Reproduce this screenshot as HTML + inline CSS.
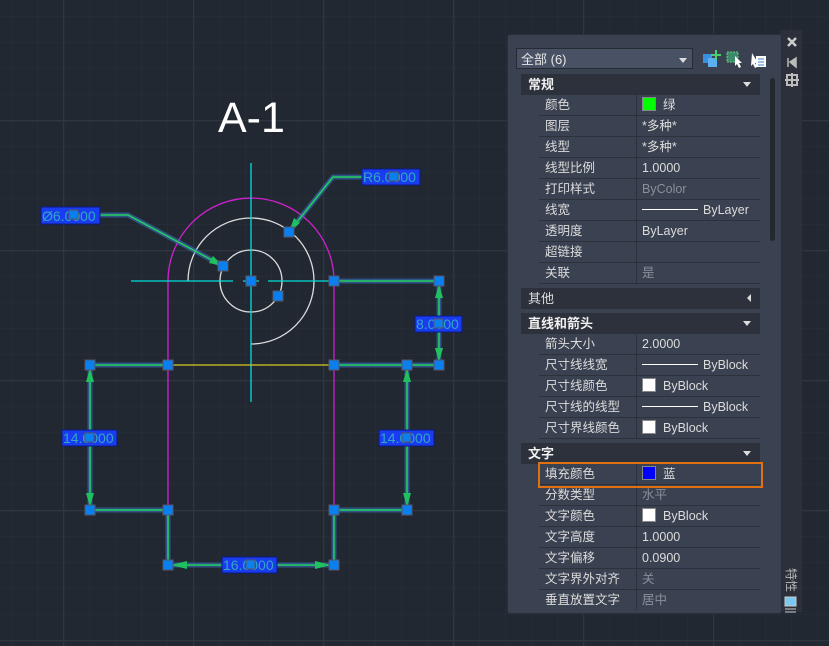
<!DOCTYPE html>
<html><head><meta charset="utf-8"><style>
body{margin:0;width:829px;height:646px;overflow:hidden;background:#222831;font-family:"Liberation Sans","Noto Sans CJK SC",sans-serif;position:relative}
svg{position:absolute;left:0;top:0}
.panel{position:absolute;left:507px;top:34px;width:273px;height:578px;background:#3a4150;border:1px solid #2a2f38;border-radius:3px}
.strip{position:absolute;left:780px;top:30px;width:22px;height:582px;background:#2b303a}
.sel{position:absolute;left:516px;top:48px;width:177px;height:21px;background:#485264;border:1px solid #262b33;color:#e6e6e6;font-size:13px;line-height:21px;padding-left:4px;box-sizing:border-box}
.sel:after{content:"";position:absolute;right:5px;top:9px;border:4px solid transparent;border-top:5px solid #ddd}
.hdr{position:absolute;left:521px;width:239px;height:21px;background:#2c313b;color:#f0f0f0;font-weight:bold;font-size:13px;line-height:21px;padding-left:7px;box-sizing:border-box}
.hdr.o{font-weight:normal;color:#ddd}
.tri{position:absolute;right:9px;top:8px;border:4px solid transparent;border-top:5px solid #ddd}
.tl{position:absolute;right:9px;top:6px;border:4px solid transparent;border-right:4px solid #ddd}
.row{position:absolute;left:539px;width:221px;height:20px;border-bottom:1px solid #2c313b;font-size:12.5px;line-height:20px;color:#dcdcdc}
.row .l{position:absolute;left:0;width:98px;padding-left:6px;box-sizing:border-box;border-right:1px solid #2c313b;height:20px;}
.row .v{position:absolute;left:99px;padding-left:4px;white-space:nowrap}
.g{color:#8a909a}
.sw{display:inline-block;width:12px;height:12px;border:1px solid #888;vertical-align:-2px;margin-right:7px}
.ln{display:inline-block;width:56px;border-top:1px solid #fff;vertical-align:4px;margin-right:5px}
.scroll{position:absolute;left:770px;top:78px;width:5px;height:163px;background:#242830;border-radius:3px}
</style></head><body>
<svg width="829" height="646">
<defs>
<pattern id="mn" x="11" y="16" width="26" height="26" patternUnits="userSpaceOnUse"><path d="M0 0H26M0 0V26" stroke="#283039" stroke-width="1" fill="none"/></pattern>
<pattern id="mj" x="63" y="120" width="130" height="130" patternUnits="userSpaceOnUse"><path d="M0 0.5H130M0.5 0V130" stroke="#2f3642" stroke-width="1.5" fill="none"/></pattern>
</defs>
<rect width="829" height="646" fill="url(#mn)"/>
<rect width="829" height="646" fill="url(#mj)"/>
<text x="218" y="132" fill="#fff" font-size="43" font-family="Liberation Sans">A-1</text>
<g fill="none">
<path d="M168 510V281A83 83 0 0 1 334 281V510" stroke="#d020d0" stroke-width="1.3"/>
<circle cx="251" cy="281" r="31" stroke="#ddd" stroke-width="1.3"/>
<path d="M188 281A63 63 0 1 1 251 344" stroke="#ddd" stroke-width="1.3"/>
<path d="M251 163V402M131 281H233M243 281H247M255 281H259M268 281H334" stroke="#00dede" stroke-width="1.3"/>
<path d="M168 365H334" stroke="#d8c820" stroke-width="1.3"/>
<g stroke="#3a6fc0" stroke-width="5" opacity="0.6">
<path d="M90 365H168M334 365H439M334 281H439M439 281V365M90 365V510M407 365V510M90 510H168M334 510H407M168 510V565M334 510V565M168 565H334M100 215H128L223 266M420 177H333L289 232"/>
</g>
<g stroke="#22d060" stroke-width="1.5">
<path d="M90 365H168M334 365H439M334 281H439M439 281V365M90 365V510M407 365V510M90 510H168M334 510H407M168 510V565M334 510V565M168 565H334M100 215H128L223 266M420 177H333L289 232"/>
</g>
</g>
<g fill="#20c060">
<path d="M439 284l-4 14h8zM439 362l-4-14h8zM90 368l-4 14h8zM90 507l-4-14h8zM407 368l-4 14h8zM407 507l-4-14h8zM171 565l16-4v8zM331 565l-16-4v8zM223 266l-14-3 4-7zM289 232l5-14 6 5z"/>
</g>
<g font-family="Liberation Sans" font-size="14" fill="#30a8c0">
<rect x="41" y="207" width="59" height="17" fill="#1a3cf0" stroke="#0a1a80"/><text x="42" y="221">Ø6.0000</text>
<rect x="362" y="169" width="58" height="16" fill="#1a3cf0" stroke="#0a1a80"/><text x="363" y="182">R6.0000</text>
<rect x="415" y="316" width="47" height="16" fill="#1a3cf0" stroke="#0a1a80"/><text x="416" y="329">8.0000</text>
<rect x="62" y="430" width="55" height="16" fill="#1a3cf0" stroke="#0a1a80"/><text x="63" y="443">14.0000</text>
<rect x="379" y="430" width="55" height="16" fill="#1a3cf0" stroke="#0a1a80"/><text x="380" y="443">14.0000</text>
<rect x="222" y="557" width="55" height="16" fill="#1a3cf0" stroke="#0a1a80"/><text x="223" y="570">16.0000</text>
</g>
<g fill="#0a80f0" stroke="#556" stroke-width="1">
<rect x="246" y="276" width="10" height="10"/><rect x="218" y="261" width="10" height="10"/><rect x="284" y="227" width="10" height="10"/><rect x="273" y="291" width="10" height="10"/>
<rect x="329" y="276" width="10" height="10"/><rect x="434" y="276" width="10" height="10"/><rect x="434" y="360" width="10" height="10"/>
<rect x="85" y="360" width="10" height="10"/><rect x="163" y="360" width="10" height="10"/><rect x="329" y="360" width="10" height="10"/><rect x="402" y="360" width="10" height="10"/>
<rect x="85" y="505" width="10" height="10"/><rect x="163" y="505" width="10" height="10"/><rect x="329" y="505" width="10" height="10"/><rect x="402" y="505" width="10" height="10"/>
<rect x="163" y="560" width="10" height="10"/><rect x="329" y="560" width="10" height="10"/>
<rect x="69" y="210" width="9" height="9"/><rect x="389" y="172" width="9" height="9"/><rect x="434" y="319" width="9" height="9"/><rect x="85" y="433" width="9" height="9"/><rect x="402" y="433" width="9" height="9"/><rect x="246" y="560" width="9" height="9"/>
</g>
</svg>
<div class="strip"></div>
<div class="panel"></div>
<svg width="829" height="646" style="pointer-events:none">
<path d="M788 38l8 8M796 38l-8 8" stroke="#ccc" stroke-width="2.5"/>
<path d="M788 58v9M790 62l6-4v9z" stroke="#bbb" fill="#bbb" stroke-width="1.5"/>
<path d="M787 75h10v10h-10z M792 73v14M785 80h14" stroke="#bbb" stroke-width="2" fill="none"/>
<rect x="703" y="54" width="9" height="9" fill="#3a90e0"/><rect x="708" y="58" width="9" height="9" fill="#5ab0f0"/><path d="M716 50v10M711 55h10" stroke="#4ad070" stroke-width="2"/>
<rect x="727" y="52" width="11" height="10" fill="#3d8a6a" stroke="#5ad080" stroke-dasharray="2 1"/><path d="M735 56l7 7-3 0 2 4-2 1-2-4-2 2z" fill="#fff"/>
<path d="M752 53l6 10-3 0 2 4-2 1-2-4-2 2z" fill="#fff"/><rect x="756" y="56" width="10" height="11" fill="#fff"/><path d="M758 59h6M758 62h6M758 65h6" stroke="#3a80d0"/>
<rect x="785" y="597" width="11" height="9" fill="#7ac8f0" stroke="#ccc"/><path d="M785 609h11M785 612h11" stroke="#ccc"/>
<text x="0" y="0" transform="translate(787,568) rotate(90)" fill="#bbb" font-size="12" font-family="Noto Sans CJK SC,sans-serif">特性</text>
</svg>
<div class="sel">全部 (6)</div>
<div class="scroll"></div>
<div class="hdr" style="top:74px">常规<span class="tri"></span></div>
<div class="row" style="top:95px"><span class="l">颜色</span><span class="v"><span class="sw" style="background:#00ff00"></span>绿</span></div>
<div class="row" style="top:116px"><span class="l">图层</span><span class="v">*多种*</span></div>
<div class="row" style="top:137px"><span class="l">线型</span><span class="v">*多种*</span></div>
<div class="row" style="top:158px"><span class="l">线型比例</span><span class="v">1.0000</span></div>
<div class="row" style="top:179px"><span class="l">打印样式</span><span class="v g">ByColor</span></div>
<div class="row" style="top:200px"><span class="l">线宽</span><span class="v"><span class="ln"></span>ByLayer</span></div>
<div class="row" style="top:221px"><span class="l">透明度</span><span class="v">ByLayer</span></div>
<div class="row" style="top:242px"><span class="l">超链接</span><span class="v"></span></div>
<div class="row" style="top:263px"><span class="l">关联</span><span class="v g">是</span></div>
<div class="hdr o" style="top:288px">其他<span class="tl"></span></div>
<div class="hdr" style="top:313px">直线和箭头<span class="tri"></span></div>
<div class="row" style="top:334px"><span class="l">箭头大小</span><span class="v">2.0000</span></div>
<div class="row" style="top:355px"><span class="l">尺寸线线宽</span><span class="v"><span class="ln"></span>ByBlock</span></div>
<div class="row" style="top:376px"><span class="l">尺寸线颜色</span><span class="v"><span class="sw" style="background:#fff"></span>ByBlock</span></div>
<div class="row" style="top:397px"><span class="l">尺寸线的线型</span><span class="v"><span class="ln"></span>ByBlock</span></div>
<div class="row" style="top:418px"><span class="l">尺寸界线颜色</span><span class="v"><span class="sw" style="background:#fff"></span>ByBlock</span></div>
<div class="hdr" style="top:443px">文字<span class="tri"></span></div>
<div class="row" style="top:464px"><span class="l">填充颜色</span><span class="v"><span class="sw" style="background:#0000ff"></span>蓝</span></div>
<div class="row" style="top:485px"><span class="l">分数类型</span><span class="v g">水平</span></div>
<div class="row" style="top:506px"><span class="l">文字颜色</span><span class="v"><span class="sw" style="background:#fff"></span>ByBlock</span></div>
<div class="row" style="top:527px"><span class="l">文字高度</span><span class="v">1.0000</span></div>
<div class="row" style="top:548px"><span class="l">文字偏移</span><span class="v">0.0900</span></div>
<div class="row" style="top:569px"><span class="l">文字界外对齐</span><span class="v g">关</span></div>
<div class="row" style="top:590px;border:none"><span class="l">垂直放置文字</span><span class="v g">居中</span></div>
<div style="position:absolute;left:538px;top:462px;width:221px;height:22px;border:2px solid #e07010"></div>
</body></html>
